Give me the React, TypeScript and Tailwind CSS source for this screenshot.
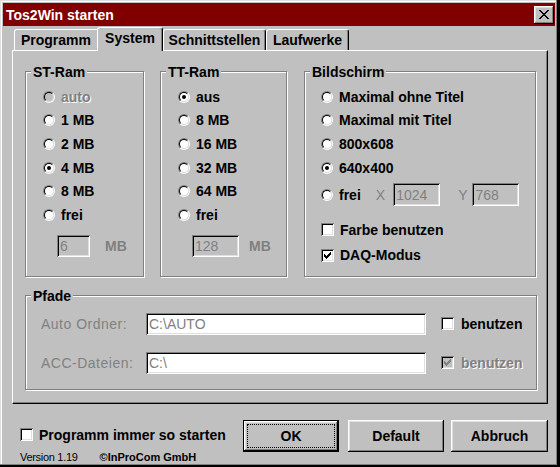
import React from "react";

const SUNKEN =
  "shadow-[inset_1px_1px_#808080,inset_-1px_-1px_#fff,inset_2px_2px_#000,inset_-2px_-2px_#dfdfdf]";
const RAISED =
  "shadow-[inset_-1px_-1px_#000,inset_1px_1px_#fff,inset_-2px_-2px_#808080,inset_2px_2px_#dfdfdf]";

function Radio({ checked, disabled }: { checked?: boolean; disabled?: boolean }) {
  return (
    <span className="inline-flex w-[12px] h-[12px] shrink-0 rounded-full border border-t-[#808080] border-l-[#808080] border-r-white border-b-white">
      <span
        className={`flex w-full h-full items-center justify-center rounded-full border border-t-black border-l-black border-r-[#dfdfdf] border-b-[#dfdfdf] ${
          disabled ? "bg-[#c0c0c0]" : "bg-white"
        }`}
      >
        {checked && <span className="w-[4px] h-[4px] rounded-full bg-black" />}
      </span>
    </span>
  );
}

function Check({ color }: { color: string }) {
  return (
    <svg width="7" height="7" viewBox="0 0 7 7" shapeRendering="crispEdges">
      <path
        fill={color}
        d="M6 0h1v1h-1z M5 1h2v1h-2z M0 2h1v1h-1z M4 2h3v1h-3z M0 3h2v1h-2z M3 3h3v1h-3z M0 4h5v1h-5z M1 5h3v1h-3z M2 6h1v1h-1z"
      />
    </svg>
  );
}

function Checkbox({ checked, disabled }: { checked?: boolean; disabled?: boolean }) {
  return (
    <span
      className={`flex w-[13px] h-[13px] shrink-0 items-center justify-center ${SUNKEN} ${
        disabled ? "bg-[#c0c0c0]" : "bg-white"
      }`}
    >
      {checked && <Check color={disabled ? "#808080" : "#000"} />}
    </span>
  );
}

function Field({ value, className, white }: { value: string; className: string; white?: boolean }) {
  return (
    <div
      className={`flex items-center pl-[3px] font-normal text-[#808080] ${SUNKEN} ${
        white ? "bg-white" : "bg-[#c0c0c0]"
      } ${className}`}
    >
      {value}
    </div>
  );
}

function Group({
  title,
  className,
  children,
}: {
  title: string;
  className: string;
  children: React.ReactNode;
}) {
  return (
    <div className={`relative border border-[#808080] shadow-[inset_1px_1px_#fff,1px_1px_#fff] ${className}`}>
      <span className="absolute left-[5px] top-[-8px] px-[2px] bg-[#c0c0c0] leading-[16px]">{title}</span>
      {children}
    </div>
  );
}

function RadioRow({
  label,
  checked,
  disabled,
}: {
  label: string;
  checked?: boolean;
  disabled?: boolean;
}) {
  return (
    <div className="flex items-center h-[23.6px] gap-[6px]">
      <Radio checked={checked} disabled={disabled} />
      <span className={disabled ? "text-[#808080] [text-shadow:1px_1px_0_#fff]" : ""}>{label}</span>
    </div>
  );
}

function Tab({ label, w, noRight }: { label: string; w: string; noRight?: boolean }) {
  return (
    <div
      className={`h-[21px] ${w} flex justify-center pt-[3px] border-t border-l border-white rounded-tl-[3px] ${
        noRight ? "" : "border-r border-r-black shadow-[inset_-1px_0_#808080] rounded-tr-[3px]"
      }`}
    >
      {label}
    </div>
  );
}

export default function App() {
  return (
    <div className="w-[560px] h-[467px] bg-[#c0c0c0] pt-[3px] pl-[3px] pr-[5px] pb-[3px] flex flex-col font-['Liberation_Sans',Arial,sans-serif] text-[14px] font-bold leading-none text-black shadow-[inset_-3px_-2px_#000,inset_-4px_-3px_#808080,inset_1px_1px_#dfdfdf,inset_2px_2px_#fff]">
      {/* Title bar */}
      <div className="h-[23px] shrink-0 bg-[#800000] flex items-center justify-between pl-[3px] pr-px">
        <span className="text-white">Tos2Win starten</span>
        <div className={`w-[20px] h-[18px] bg-[#c0c0c0] flex items-center justify-center ${RAISED}`}>
          <svg width="10" height="9" viewBox="0 0 10 9" shapeRendering="crispEdges">
            <path
              fill="#000"
              d="M0 0h2v1H0z M8 0h2v1H8z M1 1h2v1H1z M7 1h2v1H7z M2 2h2v1H2z M6 2h2v1H6z M3 3h4v1H3z M4 4h2v1H4z M3 5h4v1H3z M2 6h2v1H2z M6 6h2v1H6z M1 7h2v1H1z M7 7h2v1H7z M0 8h2v1H0z M8 8h2v1H8z"
            />
          </svg>
        </div>
      </div>

      {/* Tabs + panel */}
      <div className="ml-[9px] mr-[7px] flex flex-col">
        <div className="flex items-end h-[24px] pl-[2px]">
          <Tab label="Programm" w="w-[83px]" noRight />
          <div className="relative z-10 -mb-px h-[24px] w-[66px] flex justify-center pt-[3px] bg-[#c0c0c0] border-t border-l border-white border-r border-r-black shadow-[inset_-1px_0_#808080] rounded-t-[3px]">
            System
          </div>
          <Tab label="Schnittstellen" w="w-[103px]" />
          <Tab label="Laufwerke" w="w-[83px]" />
        </div>

        <div className="h-[354px] border-t border-l border-white border-r border-b border-r-black border-b-black shadow-[inset_-1px_-1px_#808080] pl-[12px] pt-[20px] pr-[10px]">
          <div className="flex">
            <Group title="ST-Ram" className="w-[119px] h-[206px] pl-[17px] pt-[13px]">
              <RadioRow label="auto" disabled />
              <RadioRow label="1 MB" />
              <RadioRow label="2 MB" />
              <RadioRow label="4 MB" checked />
              <RadioRow label="8 MB" />
              <RadioRow label="frei" />
              <div className="flex items-center mt-[8px]">
                <Field value="6" className="ml-[14px] w-[33px] h-[22px]" />
                <span className="ml-[15px] text-[#808080]">MB</span>
              </div>
            </Group>

            <Group title="TT-Ram" className="ml-[16px] w-[127px] h-[206px] pl-[17px] pt-[13px]">
              <RadioRow label="aus" checked />
              <RadioRow label="8 MB" />
              <RadioRow label="16 MB" />
              <RadioRow label="32 MB" />
              <RadioRow label="64 MB" />
              <RadioRow label="frei" />
              <div className="flex items-center mt-[8px]">
                <Field value="128" className="ml-[14px] w-[47px] h-[22px]" />
                <span className="ml-[10px] text-[#808080]">MB</span>
              </div>
            </Group>

            <Group title="Bildschirm" className="ml-[17px] w-[232px] h-[206px] pl-[16px] pt-[13px]">
              <RadioRow label="Maximal ohne Titel" />
              <RadioRow label="Maximal mit Titel" />
              <RadioRow label="800x608" />
              <RadioRow label="640x400" checked />
              <div className="flex items-center h-[23px] mt-[4px]">
                <Radio />
                <span className="ml-[6px]">frei</span>
                <span className="ml-[15px] font-normal text-[#808080]">X</span>
                <Field value="1024" className="ml-[8px] w-[47px] h-[23px]" />
                <span className="ml-[18px] font-normal text-[#808080]">Y</span>
                <Field value="768" className="ml-[5px] w-[47px] h-[23px]" />
              </div>
              <div className="flex items-center h-[25px] mt-[11px] gap-[6px]">
                <Checkbox />
                <span>Farbe benutzen</span>
              </div>
              <div className="flex items-center h-[26px] gap-[6px]">
                <Checkbox checked />
                <span>DAQ-Modus</span>
              </div>
            </Group>
          </div>

          <Group title="Pfade" className="mt-[18px] h-[95px] pl-[15px] pt-[16px]">
            <div className="flex items-center h-[23px]">
              <span className="w-[105px] font-normal text-[#808080] tracking-[0.5px]">Auto Ordner:</span>
              <Field value="C:\AUTO" white className="w-[280px] h-[22px]" />
              <span className="ml-[15px]">
                <Checkbox />
              </span>
              <span className="ml-[7px]">benutzen</span>
            </div>
            <div className="flex items-center h-[23px] mt-[16px]">
              <span className="w-[105px] font-normal text-[#808080] tracking-[0.5px]">ACC-Dateien:</span>
              <Field value="C:\" white className="w-[280px] h-[22px]" />
              <span className="ml-[15px]">
                <Checkbox checked disabled />
              </span>
              <span className="ml-[7px] text-[#808080] [text-shadow:1px_1px_0_#fff]">benutzen</span>
            </div>
          </Group>
        </div>
      </div>

      {/* Bottom */}
      <div className="flex h-[60px] pl-[17px] pr-[7px]">
        <div className="flex flex-col">
          <div className="mt-[23px] flex items-center h-[16px] gap-[6px]">
            <Checkbox />
            <span>Programm immer so starten</span>
          </div>
          <div className="mt-[9px] flex items-center h-[13px] text-[11px] font-normal tracking-[-0.3px]">
            <span>Version 1.19</span>
            <span className="ml-[22px] font-bold tracking-normal">©InProCom GmbH</span>
          </div>
        </div>
        <div className="ml-auto mt-[16px] flex items-start">
          <div className="relative w-[96px] h-[32px] border border-black bg-[#c0c0c0] flex items-center justify-center shadow-[inset_-1px_-1px_#000,inset_1px_1px_#fff,inset_-2px_-2px_#808080,inset_2px_2px_#dfdfdf]">
            OK
            <span className="absolute inset-[3px] border border-dotted border-black" />
          </div>
          <div className={`ml-[9px] w-[96px] h-[32px] flex items-center justify-center ${RAISED}`}>Default</div>
          <div className={`ml-[7px] w-[97px] h-[32px] flex items-center justify-center ${RAISED}`}>Abbruch</div>
        </div>
      </div>
    </div>
  );
}
